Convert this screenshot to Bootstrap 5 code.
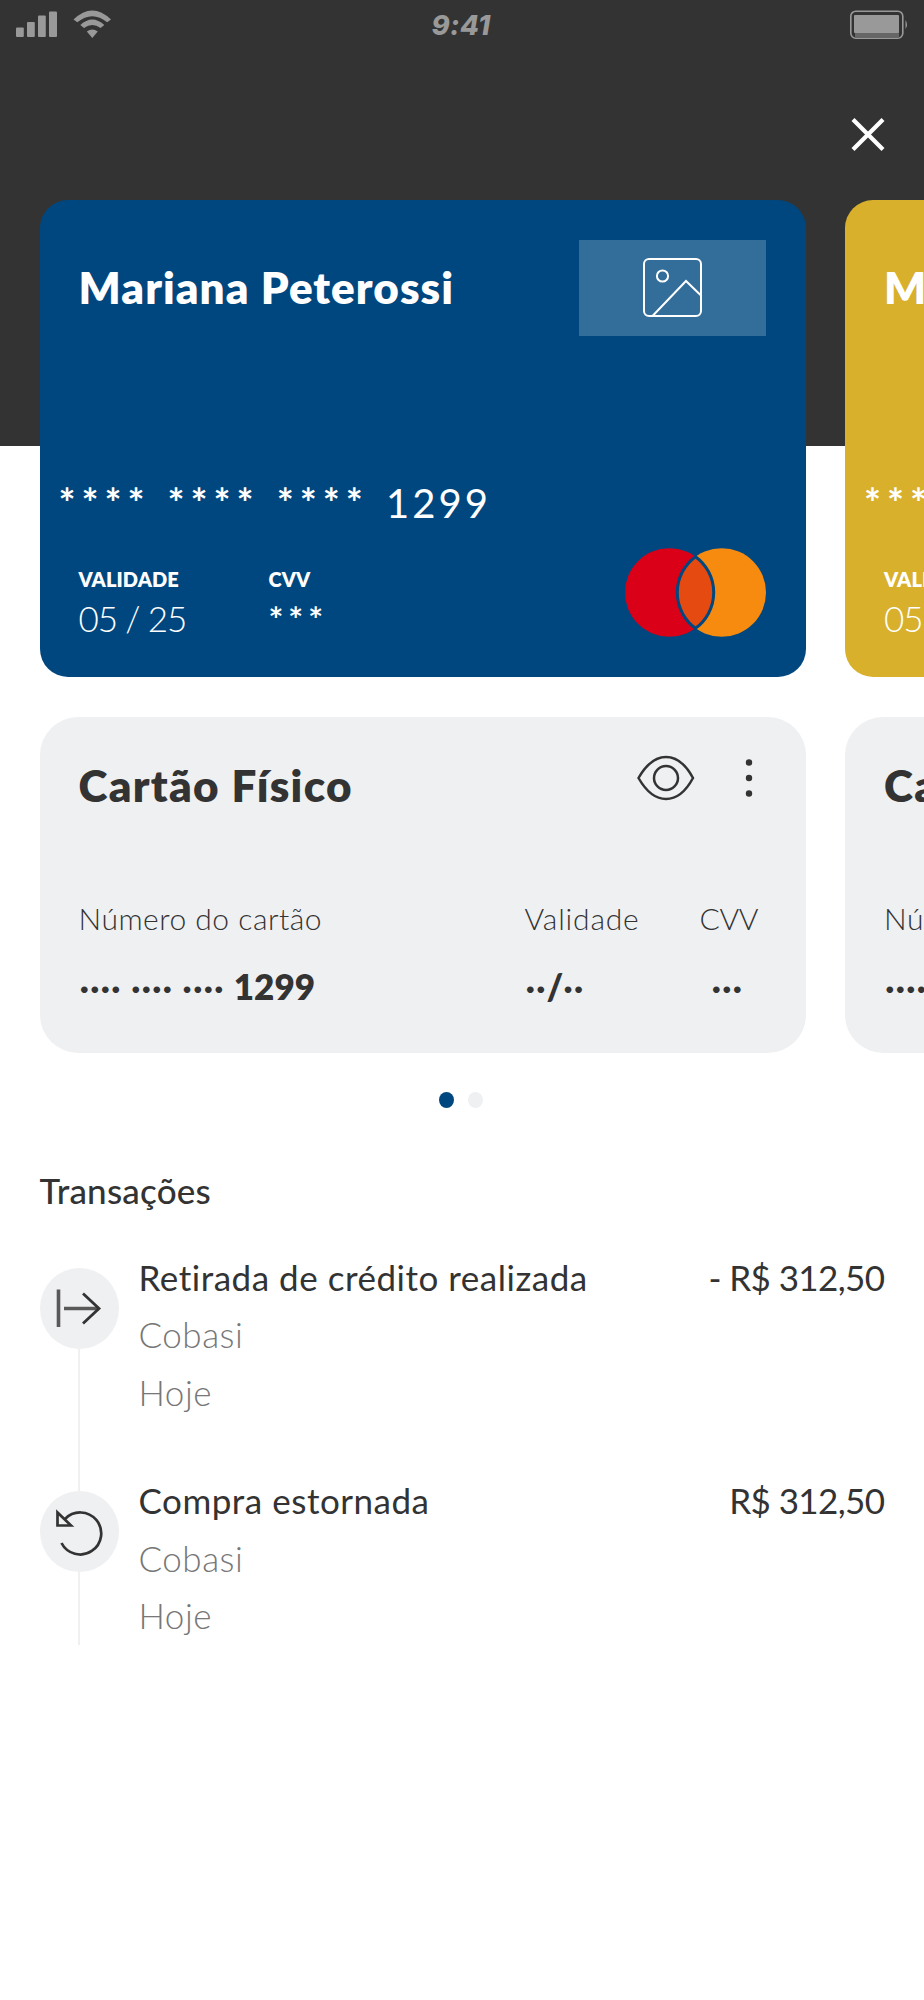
<!DOCTYPE html>
<html lang="pt-BR">
<head>
<meta charset="utf-8">
<meta name="viewport" content="width=device-width, initial-scale=1">
<title>Cartões</title>
<link rel="stylesheet" href="https://cdn.jsdelivr.net/npm/bootstrap@5.3.0/dist/css/bootstrap.min.css">
<style>
  body{font-family:Lato,"Open Sans",sans-serif;color:#333;background:#fff;line-height:1}
  svg{display:block;flex:none}
  .screen{width:924px;height:2000px;background:linear-gradient(#333 446px,#fff 446px)}
  .status-row{height:50px;padding:10px 15px 0;color:#999}
  .clock{font:italic 800 27.5px/31px Inter,sans-serif;letter-spacing:.3px;padding-right:2px}
  .close-row{height:150px;padding:67px 39px 0 0}
  .track{padding-left:39.5px;gap:39.5px}
  .slide{flex:0 0 766px}
  .bank{height:477px;border-radius:28px;color:#fff;background:#00477f;padding:40px 40px 0 39px}
  .bank.gold{background:#d8b02b}
  .holder{font-size:44px;font-weight:800;letter-spacing:1.05px;margin-top:25px}
  .thumb{width:187px;height:96px;background:#336d99}
  .digits{font-size:40px;letter-spacing:3.1px;margin:147px 0 0 -20px}
  .digits .stars{font-weight:700;letter-spacing:6px;word-spacing:1.4px}
  .fields{margin-top:25px}
  .cap{font-size:20px;font-weight:800;letter-spacing:.1px;padding-top:21px}
  .val{font-size:35px;font-weight:300;letter-spacing:-1.1px;margin-top:12px}
  .val.stars{letter-spacing:5px;font-weight:700}
  .fields .first{width:190px}
  .info{height:336px;border-radius:38px;background:#eff0f2;margin-top:39.5px;padding:38px 0 0 39px}
  .info h2{font-size:44px;font-weight:800;letter-spacing:1.3px;line-height:1;margin:8px 0 0}
  .tools{gap:49.500px;padding-right:53px}
  .grid-3{display:grid;grid-template-columns:446px 175px auto;row-gap:36px;margin-top:96px}
  .lbl{font-size:30px;font-weight:300;letter-spacing:.5px}
  .lbl.wide{letter-spacing:.8px}
  .lbl.tight{letter-spacing:-.4px}
  .strong-val{font-size:35px;font-weight:800;padding-left:1px}
  .dots{letter-spacing:.9px;font-weight:700}
  .pager{gap:14px;margin-top:39px;padding-right:3px}
  .pager i{width:15px;height:16px;border-radius:50%;background:#eff0f2}
  .pager i.on{background:#00477f}
  .tx-title{font-size:35px;line-height:1;letter-spacing:.2px;margin:65px 0 52px 39.5px}
  .tx{height:223.5px;padding:0 39.5px}
  .tx:last-child{height:385px}
  .rail{width:79px;margin-right:20px;padding-top:8px}
  .dot-icon{width:79px;height:81px;border-radius:50%;background:#eff0f2;flex:none}
  .stem{width:1.5px;background:#f0f0f0;margin-bottom:-8px}
  .tx:last-child .stem{flex:none!important;height:73px}
  .lines{font-size:35px;gap:22.7px}
  .lines .main{letter-spacing:.52px}
  .lines .sub{font-weight:300;letter-spacing:.5px;color:#777}
  .price{font-size:35px;letter-spacing:-.6px}
</style>
</head>
<body>
<svg width="0" height="0" class="position-absolute">
  <defs>
    <symbol id="brand" viewBox="0 0 141 89">
      <circle cx="44.3" cy="44.5" r="44.3" fill="#da0017"/>
      <circle cx="96.7" cy="44.5" r="44.3" fill="#f68b0f"/>
      <path d="M70.5 8.7A44.3 44.3 0 0 1 70.5 80.3A44.3 44.3 0 0 1 70.5 8.7Z" fill="#e54a11" stroke="#00477f" stroke-width="3"/>
    </symbol>
    <symbol id="picture" viewBox="0 0 62 62">
      <g fill="none" stroke="#fff" stroke-width="2">
        <rect x="3" y="2" width="57" height="57" rx="5"/><circle cx="21.500" cy="19" r="5.6"/><path d="M11.500 59L45 24L60 38.500"/>
      </g>
    </symbol>
    <symbol id="eye" viewBox="0 0 58 46">
      <g fill="none" stroke="#333" stroke-width="2.5">
        <path d="M1.500 23C9 10 18 2 29 2S49 10 56 23C49 36 40 44 29 44S9 36 1.500 23Z"/><circle cx="29" cy="23" r="12"/>
      </g>
    </symbol>
    <symbol id="more" viewBox="0 0 8 40">
      <g fill="#333"><circle cx="4" cy="4.500" r="3.200"/><circle cx="4" cy="20" r="3.200"/><circle cx="4" cy="35.500" r="3.200"/></g>
    </symbol>
  </defs>
</svg>
<main class="screen overflow-hidden">
  <header>
    <div class="status-row d-flex justify-content-between align-items-start">
      <svg width="97" height="30" viewBox="0 0 97 30" fill="#999">
        <rect x="1" y="17.500" width="7.800" height="9.500" rx="1"/><rect x="12" y="12" width="7.800" height="15" rx="1"/><rect x="23" y="5.500" width="7.800" height="21.500" rx="1"/><rect x="34" y="1.500" width="8" height="25.500" rx="1"/>
        <path d="M58.500 9.500Q77.300-8.500 96 9.500L92.200 12.300Q77.300 0 62.300 12.300Z"/>
        <path d="M65.300 15Q77.300 4 89.300 15L85.600 18Q77.300 12 69 18Z"/>
        <path d="M71.800 21.500Q77.300 17.300 82.800 21.500L77.300 28Z"/>
      </svg>
      <div class="clock">9:41</div>
      <div class="d-flex justify-content-end" style="width:97px">
        <svg width="60" height="30" viewBox="0 0 60 30">
          <rect x="1.800" y="1.200" width="52" height="27" rx="5" fill="none" stroke="#999" stroke-width="1.600"/>
          <path d="M6 22H50V28H6Z" fill="#666"/>
          <rect x="5" y="5" width="45" height="18" rx="1" fill="#999"/>
          <path d="M56.500 10Q59.500 14.500 56.500 19Z" fill="#999"/>
        </svg>
      </div>
    </div>
    <div class="close-row d-flex justify-content-end">
      <svg width="34" height="35" viewBox="0 0 34 35"><path d="M2 2.500L32 32.500M32 2.500L2 32.500" stroke="#fff" stroke-width="4.200"/></svg>
    </div>
  </header>

  <div class="track d-flex overflow-hidden">
    <section class="slide">
      <div class="bank">
        <div class="d-flex justify-content-between align-items-start">
          <div class="holder">Mariana Peterossi</div>
          <div class="thumb d-flex justify-content-center align-items-center"><svg width="62" height="62"><use href="#picture"/></svg></div>
        </div>
        <div class="digits"><span class="stars">**** **** **** </span>1299</div>
        <div class="fields d-flex align-items-start">
          <div class="first"><div class="cap">VALIDADE</div><div class="val">05 / 25</div></div>
          <div><div class="cap">CVV</div><div class="val stars">***</div></div>
          <svg class="ms-auto" width="141" height="89"><use href="#brand"/></svg>
        </div>
      </div>
      <div class="info">
        <div class="d-flex justify-content-between align-items-start">
          <h2>Cartão Físico</h2>
          <div class="tools d-flex align-items-center"><svg width="58" height="46"><use href="#eye"/></svg><svg width="8" height="40"><use href="#more"/></svg></div>
        </div>
        <div class="grid-3">
          <div class="lbl">Número do cartão</div><div class="lbl wide">Validade</div><div class="lbl tight">CVV</div>
          <div class="strong-val"><span class="dots">···· ···· ···· </span>1299</div><div class="strong-val"><span class="dots">··</span>/<span class="dots">··</span></div><div class="strong-val ps-2 ms-1"><span class="dots">···</span></div>
        </div>
      </div>
    </section>
    <section class="slide">
      <div class="bank gold">
        <div class="d-flex justify-content-between align-items-start">
          <div class="holder">Mariana Peterossi</div>
          <div class="thumb"></div>
        </div>
        <div class="digits"><span class="stars">**** **** **** </span>1299</div>
        <div class="fields d-flex align-items-start">
          <div class="first"><div class="cap">VALIDADE</div><div class="val">05 / 25</div></div>
        </div>
      </div>
      <div class="info">
        <div class="d-flex justify-content-between align-items-start">
          <h2>Cartão Físico</h2>
          <div class="tools"><svg width="58" height="46"><use href="#eye"/></svg></div>
        </div>
        <div class="grid-3">
          <div class="lbl">Número do cartão</div><div></div><div></div>
          <div class="strong-val"><span class="dots">···· ···· ···· </span>1299</div>
        </div>
      </div>
    </section>
  </div>

  <div class="pager d-flex justify-content-center"><i class="on"></i><i></i></div>

  <section>
    <h3 class="tx-title">Transações</h3>
    <div>
      <article class="tx d-flex">
        <div class="rail d-flex flex-column align-items-center">
          <div class="dot-icon d-flex justify-content-center align-items-center">
            <svg width="50" height="44" viewBox="0 0 50 44" fill="none" stroke="#333" stroke-width="3.600"><path d="M4.500 3.500V41M10 22.500H45" opacity=".8"/><path d="M29 7.500L45 22.500L29 37.500" stroke-width="2.800"/></svg>
          </div>
          <div class="stem flex-fill"></div>
        </div>
        <div class="lines d-flex flex-column flex-fill"><div class="main">Retirada de crédito realizada</div><div class="sub">Cobasi</div><div class="sub">Hoje</div></div>
        <div class="price">- R$ 312,50</div>
      </article>
      <article class="tx d-flex">
        <div class="rail d-flex flex-column align-items-center">
          <div class="dot-icon d-flex justify-content-center align-items-center">
            <svg width="48" height="48" viewBox="0 0 48 48" fill="none" stroke="#333" stroke-width="2.700"><path d="M6.500 35A21 21 0 1 0 10 11"/><path d="M2.500 4.500V17.500H16Z"/></svg>
          </div>
          <div class="stem flex-fill"></div>
        </div>
        <div class="lines d-flex flex-column flex-fill"><div class="main">Compra estornada</div><div class="sub">Cobasi</div><div class="sub">Hoje</div></div>
        <div class="price">R$ 312,50</div>
      </article>
    </div>
  </section>
</main>
<script src="https://cdn.jsdelivr.net/npm/bootstrap@5.3.0/dist/js/bootstrap.bundle.min.js"></script>
</body>
</html>
